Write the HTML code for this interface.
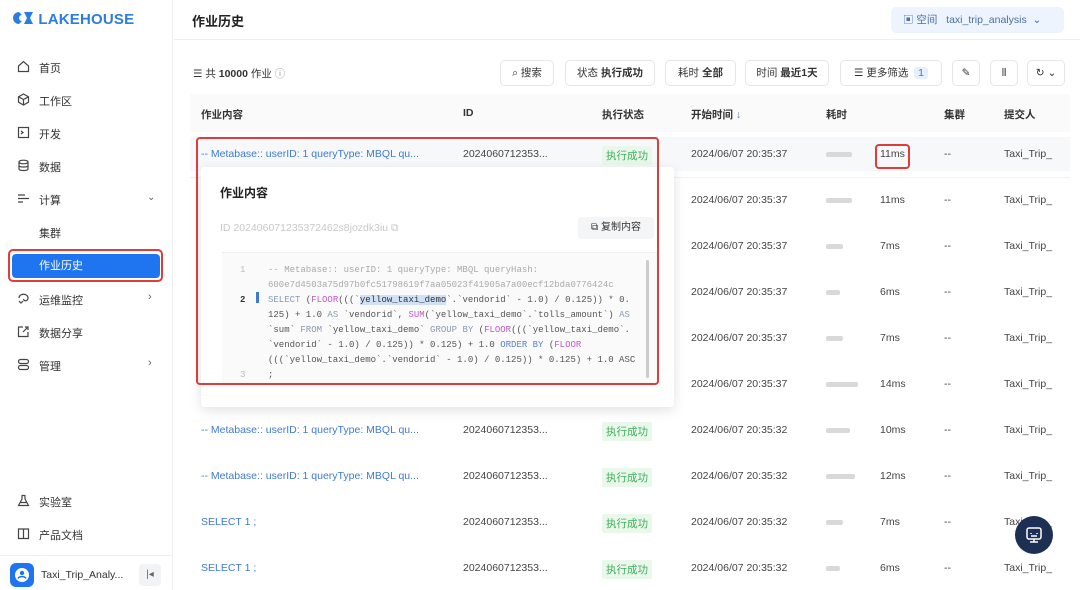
<!DOCTYPE html>
<html><head><meta charset="utf-8"><style>
*{box-sizing:border-box;margin:0;padding:0}
body{width:1080px;height:590px;overflow:hidden;background:#fff;font-family:"Liberation Sans","Noto Sans CJK SC",sans-serif;color:#333;font-size:11px;position:relative}
.a{position:absolute;white-space:nowrap}
.side{position:absolute;left:0;top:0;width:173px;height:590px;border-right:1px solid #eee;background:#fff}
.nav{position:absolute;left:17px;font-size:11px;color:#333}
.nav svg{position:absolute;left:0;top:0}
.nav span{position:absolute;left:22px;top:0;white-space:nowrap}
.btn{position:absolute;top:60px;height:26px;border:1px solid #e6e6e6;border-radius:5px;font-size:10.5px;color:#333;line-height:24px;text-align:center;white-space:nowrap;background:#fff}
.cell{position:absolute;white-space:nowrap;font-size:10.5px;color:#444}
.lnk{color:#3f7ad6}
.ok{position:absolute;background:#eaf8ec;color:#3fae5a;font-size:10.5px;padding:2px 4px;border-radius:2px}
.bar{position:absolute;height:5px;background:#d9d9d9;border-radius:2px;left:826px}
.code{font-family:"Liberation Mono",monospace;font-size:9px;color:#555}
</style></head><body>
<div class="side">
 <div class="a" style="left:12px;top:11px;font-weight:bold;font-size:15px;color:#2b7de0;letter-spacing:0.2px">
  <svg width="22" height="14" viewBox="0 0 22 14" style="vertical-align:-1px"><path d="M7 1 A6 6 0 1 0 7 13 L10 10 A3 3 0 1 1 10 4 Z" fill="#2b7de0"/><path d="M12 1 L21 1 L18 7 L21 13 L12 13 L15 7 Z" fill="#2b7de0"/></svg> LAKEHOUSE</div>
 <div class="nav" style="top:60px"><svg width="13" height="13" viewBox="0 0 13 13" fill="none" stroke="#444" stroke-width="1.2"><path d="M1.5 6 L6.5 1.5 L11.5 6 V11.5 H1.5Z"/></svg><span>首页</span></div>
 <div class="nav" style="top:93px"><svg width="13" height="13" viewBox="0 0 13 13" fill="none" stroke="#444" stroke-width="1.2"><path d="M6.5 1 L11.5 3.8 V9.2 L6.5 12 L1.5 9.2 V3.8Z M1.5 3.8 L6.5 6.5 L11.5 3.8 M6.5 6.5 V12"/></svg><span>工作区</span></div>
 <div class="nav" style="top:126px"><svg width="13" height="13" viewBox="0 0 13 13" fill="none" stroke="#444" stroke-width="1.2"><rect x="1.5" y="1.5" width="10" height="10"/><path d="M4 5 L6 6.5 L4 8"/></svg><span>开发</span></div>
 <div class="nav" style="top:159px"><svg width="13" height="13" viewBox="0 0 13 13" fill="none" stroke="#444" stroke-width="1.2"><ellipse cx="6.5" cy="3" rx="4.5" ry="1.8"/><path d="M2 3 V10 C2 12 11 12 11 10 V3 M2 6.5 C2 8.5 11 8.5 11 6.5"/></svg><span>数据</span></div>
 <div class="nav" style="top:192px"><svg width="13" height="13" viewBox="0 0 13 13" fill="none" stroke="#444" stroke-width="1.2"><path d="M1 3 H8 M1 6.5 H12 M1 10 H6"/></svg><span>计算</span></div>
 <div class="a" style="left:147px;top:192px;color:#666;font-size:10px">⌄</div>
 <div class="a" style="left:39px;top:225px;font-size:11px">集群</div>
 <div class="a" style="left:8px;top:249px;width:155px;height:33px;border:2px solid #e03c3c;border-radius:5px"></div>
 <div class="a" style="left:12px;top:254px;width:148px;height:24px;background:#1f75f0;border-radius:4px;color:#fff;font-size:11px;line-height:24px;padding-left:27px">作业历史</div>
 <div class="nav" style="top:292px"><svg width="13" height="13" viewBox="0 0 13 13" fill="none" stroke="#444" stroke-width="1.2"><path d="M2 6 C2 1 11 1 11 6 C11 9 7 10 6.5 7 M2 9 L4 11 L6 9"/></svg><span>运维监控</span></div>
 <div class="a" style="left:148px;top:291px;color:#666">›</div>
 <div class="nav" style="top:325px"><svg width="13" height="13" viewBox="0 0 13 13" fill="none" stroke="#444" stroke-width="1.2"><path d="M6 2 H1.5 V11.5 H11 V7 M6 7 L11 2 M8 2 H11 V5"/></svg><span>数据分享</span></div>
 <div class="nav" style="top:358px"><svg width="13" height="13" viewBox="0 0 13 13" fill="none" stroke="#444" stroke-width="1.2"><rect x="1.5" y="1.5" width="10" height="4" rx="2"/><rect x="1.5" y="7.5" width="10" height="4" rx="2"/></svg><span>管理</span></div>
 <div class="a" style="left:148px;top:357px;color:#666">›</div>
 <div class="nav" style="top:494px"><svg width="13" height="13" viewBox="0 0 13 13" fill="none" stroke="#444" stroke-width="1.2"><path d="M4.5 1.5 H8.5 M5 1.5 V5 L1.5 11.5 H11.5 L8 5 V1.5 M3 8.5 H10"/></svg><span>实验室</span></div>
 <div class="nav" style="top:527px"><svg width="13" height="13" viewBox="0 0 13 13" fill="none" stroke="#444" stroke-width="1.2"><path d="M1.5 2 H6.5 V11.5 H1.5Z M6.5 2 H11.5 V11.5 H6.5"/></svg><span>产品文档</span></div>
 <div class="a" style="left:0;top:555px;width:173px;border-top:1px solid #eee"></div>
 <div class="a" style="left:10px;top:563px;width:24px;height:24px;background:#1f75f0;border-radius:6px"><svg width="24" height="24" viewBox="0 0 24 24"><circle cx="12" cy="12" r="7" fill="#fff"/><circle cx="12" cy="10" r="2.2" fill="#1f75f0"/><path d="M8 15.5 C9 13 15 13 16 15.5" stroke="#1f75f0" stroke-width="1.6" fill="none"/></svg></div>
 <div class="a" style="left:41px;top:569px;font-size:10.5px;color:#333">Taxi_Trip_Analy...</div>
 <div class="a" style="left:139px;top:564px;width:22px;height:22px;background:#f2f3f5;border-radius:4px;color:#666;font-size:10px;text-align:center;line-height:22px">|◂</div>
</div>

<!-- header -->
<div class="a" style="left:174px;top:0;width:906px;height:40px;border-bottom:1px solid #eee"></div>
<div class="a" style="left:192px;top:11px;font-size:13px;font-weight:bold;color:#222">作业历史</div>
<div class="a" style="left:891px;top:7px;width:173px;height:26px;background:#edf4fd;border-radius:5px;font-size:10.5px;color:#4a6fa0;line-height:26px;padding-left:12px">▣ 空间 &nbsp;&nbsp;taxi_trip_analysis &nbsp;⌄</div>

<!-- toolbar -->
<div class="a" style="left:193px;top:66px;font-size:10.5px;color:#333">☰ 共 <b>10000</b> 作业 <span style="color:#999">ⓘ</span></div>
<div class="btn" style="left:500px;width:54px">⌕ 搜索</div>
<div class="btn" style="left:565px;width:90px">状态 <b>执行成功</b></div>
<div class="btn" style="left:665px;width:71px">耗时 <b>全部</b></div>
<div class="btn" style="left:745px;width:84px">时间 <b>最近1天</b></div>
<div class="btn" style="left:840px;width:102px">☰ 更多筛选 &nbsp;<span style="background:#e6effc;color:#3f7ad6;padding:0 4px;border-radius:3px">1</span></div>
<div class="btn" style="left:952px;width:28px">✎</div>
<div class="btn" style="left:990px;width:28px">⦀</div>
<div class="btn" style="left:1027px;width:38px">↻ ⌄</div>

<!-- table header -->
<div class="a" style="left:190px;top:94px;width:880px;height:38px;background:#fafafa"></div>
<div class="cell" style="left:201px;top:107px;font-weight:bold;color:#333">作业内容</div>
<div class="cell" style="left:463px;top:107px;font-weight:bold;color:#333">ID</div>
<div class="cell" style="left:602px;top:107px;font-weight:bold;color:#333">执行状态</div>
<div class="cell" style="left:691px;top:107px;font-weight:bold;color:#333">开始时间 <span style="color:#3f7ad6">↓</span></div>
<div class="cell" style="left:826px;top:107px;font-weight:bold;color:#333">耗时</div>
<div class="cell" style="left:944px;top:107px;font-weight:bold;color:#333">集群</div>
<div class="cell" style="left:1004px;top:107px;font-weight:bold;color:#333">提交人</div>

<!-- rows -->
<div class="a" style="left:190px;top:137px;width:880px;height:34px;background:#f7f8fa"></div>
<div class="cell lnk" style="left:201px;top:148px">-- Metabase:: userID: 1 queryType: MBQL qu...</div>
<div class="cell" style="left:463px;top:148px">2024060712353...</div>
<div class="ok" style="left:602px;top:146px">执行成功</div>

<div class="cell" style="left:691px;top:148px">2024/06/07 20:35:37</div><div class="bar" style="top:152px;width:26px"></div><div class="cell" style="left:880px;top:148px">11ms</div><div class="cell" style="left:944px;top:148px">--</div><div class="cell" style="left:1004px;top:148px">Taxi_Trip_</div>
<div class="cell" style="left:691px;top:194px">2024/06/07 20:35:37</div><div class="bar" style="top:198px;width:26px"></div><div class="cell" style="left:880px;top:194px">11ms</div><div class="cell" style="left:944px;top:194px">--</div><div class="cell" style="left:1004px;top:194px">Taxi_Trip_</div>
<div class="cell" style="left:691px;top:240px">2024/06/07 20:35:37</div><div class="bar" style="top:244px;width:17px"></div><div class="cell" style="left:880px;top:240px">7ms</div><div class="cell" style="left:944px;top:240px">--</div><div class="cell" style="left:1004px;top:240px">Taxi_Trip_</div>
<div class="cell" style="left:691px;top:286px">2024/06/07 20:35:37</div><div class="bar" style="top:290px;width:14px"></div><div class="cell" style="left:880px;top:286px">6ms</div><div class="cell" style="left:944px;top:286px">--</div><div class="cell" style="left:1004px;top:286px">Taxi_Trip_</div>
<div class="cell" style="left:691px;top:332px">2024/06/07 20:35:37</div><div class="bar" style="top:336px;width:17px"></div><div class="cell" style="left:880px;top:332px">7ms</div><div class="cell" style="left:944px;top:332px">--</div><div class="cell" style="left:1004px;top:332px">Taxi_Trip_</div>
<div class="cell" style="left:691px;top:378px">2024/06/07 20:35:37</div><div class="bar" style="top:382px;width:32px"></div><div class="cell" style="left:880px;top:378px">14ms</div><div class="cell" style="left:944px;top:378px">--</div><div class="cell" style="left:1004px;top:378px">Taxi_Trip_</div>

<div class="cell lnk" style="left:201px;top:424px">-- Metabase:: userID: 1 queryType: MBQL qu...</div><div class="cell" style="left:463px;top:424px">2024060712353...</div><div class="ok" style="left:602px;top:422px">执行成功</div>
<div class="cell" style="left:691px;top:424px">2024/06/07 20:35:32</div><div class="bar" style="top:428px;width:24px"></div><div class="cell" style="left:880px;top:424px">10ms</div><div class="cell" style="left:944px;top:424px">--</div><div class="cell" style="left:1004px;top:424px">Taxi_Trip_</div>
<div class="cell lnk" style="left:201px;top:470px">-- Metabase:: userID: 1 queryType: MBQL qu...</div><div class="cell" style="left:463px;top:470px">2024060712353...</div><div class="ok" style="left:602px;top:468px">执行成功</div>
<div class="cell" style="left:691px;top:470px">2024/06/07 20:35:32</div><div class="bar" style="top:474px;width:29px"></div><div class="cell" style="left:880px;top:470px">12ms</div><div class="cell" style="left:944px;top:470px">--</div><div class="cell" style="left:1004px;top:470px">Taxi_Trip_</div>
<div class="cell lnk" style="left:201px;top:516px">SELECT 1 ;</div><div class="cell" style="left:463px;top:516px">2024060712353...</div><div class="ok" style="left:602px;top:514px">执行成功</div>
<div class="cell" style="left:691px;top:516px">2024/06/07 20:35:32</div><div class="bar" style="top:520px;width:17px"></div><div class="cell" style="left:880px;top:516px">7ms</div><div class="cell" style="left:944px;top:516px">--</div><div class="cell" style="left:1004px;top:516px">Taxi_Trip_</div>
<div class="cell lnk" style="left:201px;top:562px">SELECT 1 ;</div><div class="cell" style="left:463px;top:562px">2024060712353...</div><div class="ok" style="left:602px;top:560px">执行成功</div>
<div class="cell" style="left:691px;top:562px">2024/06/07 20:35:32</div><div class="bar" style="top:566px;width:14px"></div><div class="cell" style="left:880px;top:562px">6ms</div><div class="cell" style="left:944px;top:562px">--</div><div class="cell" style="left:1004px;top:562px">Taxi_Trip_</div>

<!-- row separators -->
<div class="a" style="left:190px;top:177px;width:880px;border-top:1px solid #f2f2f2"></div>

<!-- popover -->
<div class="a" style="left:201px;top:167px;width:473px;height:240px;background:#fff;box-shadow:0 3px 12px rgba(0,0,0,.12);border-radius:3px"></div>
<div class="a" style="left:220px;top:184px;font-size:12px;font-weight:bold;color:#222">作业内容</div>
<div class="a" style="left:220px;top:222px;font-size:10.5px;color:#c8c8c8">ID 202406071235372462s8jozdk3iu ⧉</div>
<div class="a" style="left:578px;top:217px;width:76px;height:22px;background:#f4f5f7;border-radius:3px;font-size:10px;color:#333;line-height:22px;text-align:center">⧉ 复制内容</div>
<div class="a" style="left:222px;top:252px;width:436px;height:132px;background:#fafafa;border-top:1px solid #eee"></div>
<div class="a" style="left:646px;top:260px;width:3px;height:118px;background:#ccc;border-radius:2px"></div>
<div class="a code" style="left:240px;top:263px;line-height:15px;color:#bbb">1<br><br><span style="color:#333;font-weight:bold">2</span><br><br><br><br><br>3</div>
<div class="a" style="left:256px;top:292px;width:3px;height:11px;background:#3f7ad6"></div>
<div class="a code" style="left:268px;top:263px;line-height:15px">
<span style="color:#aaa">-- Metabase:: userID: 1 queryType: MBQL queryHash:</span><br>
<span style="color:#aaa">600e7d4503a75d97b0fc51798619f7aa05023f41905a7a00ecf12bda0776424c</span><br>
<span style="color:#8a9ab5">SELECT</span> (<span style="color:#c05ac0">FLOOR</span>(((`<span style="background:#cfe0f7;color:#333">yellow_taxi_demo</span>`.`vendorid` - 1.0) / 0.125)) * 0.<br>
125) + 1.0 <span style="color:#8a9ab5">AS</span> `vendorid`, <span style="color:#c05ac0">SUM</span>(`yellow_taxi_demo`.`tolls_amount`) <span style="color:#8a9ab5">AS</span><br>
`sum` <span style="color:#8a9ab5">FROM</span> `yellow_taxi_demo` <span style="color:#8a9ab5">GROUP BY</span> (<span style="color:#c05ac0">FLOOR</span>(((`yellow_taxi_demo`.<br>
`vendorid` - 1.0) / 0.125)) * 0.125) + 1.0 <span style="color:#5a7fd0">ORDER BY</span> (<span style="color:#c05ac0">FLOOR</span><br>
(((`yellow_taxi_demo`.`vendorid` - 1.0) / 0.125)) * 0.125) + 1.0 ASC<br>
;</div>

<!-- red highlight boxes -->
<div class="a" style="left:196px;top:137px;width:463px;height:248px;border:2.5px solid #e03c3c;border-radius:4px"></div>
<div class="a" style="left:875px;top:144px;width:35px;height:25px;border:2.5px solid #e03c3c;border-radius:4px"></div>

<!-- floating bot -->
<div class="a" style="left:1015px;top:516px;width:38px;height:38px;border-radius:50%;background:#1d2f52"><svg width="38" height="38" viewBox="0 0 38 38" fill="none" stroke="#fff" stroke-width="1.5"><rect x="12" y="12" width="14" height="11" rx="2"/><path d="M16 17 V18 M22 17 V18 M16 20 H22 M19 23 V26 M15 26 H23"/></svg></div>
</body></html>
